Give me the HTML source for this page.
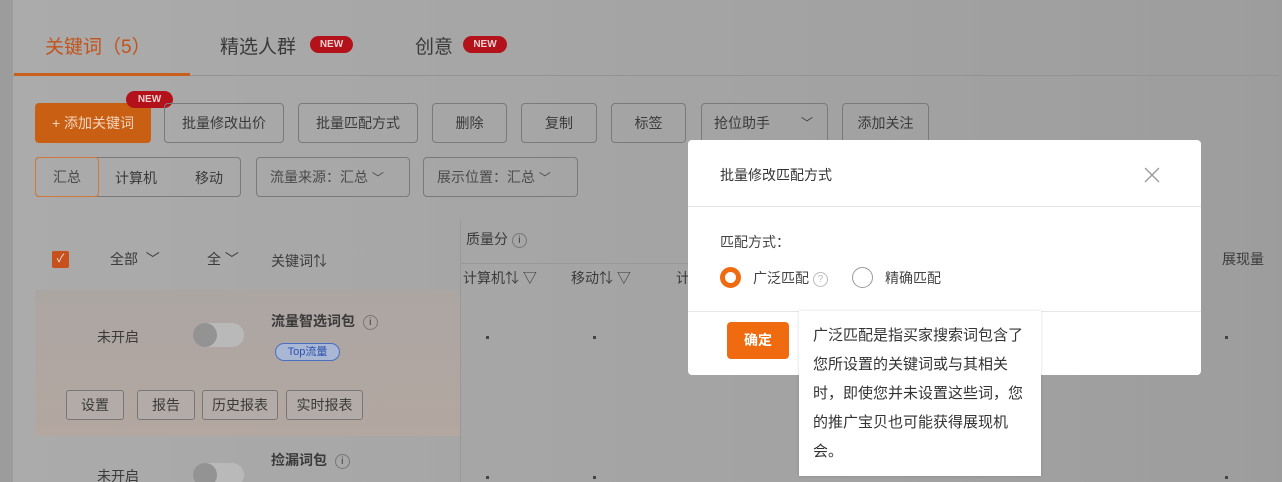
<!DOCTYPE html>
<html><head><meta charset="utf-8"><style>
*{margin:0;padding:0;box-sizing:border-box}
html,body{width:1282px;height:482px;overflow:hidden}
body{background:#9c9c9c;font-family:"Liberation Sans","Noto Sans CJK SC",sans-serif;position:relative;color:#3a3a3a}
.a{position:absolute;white-space:nowrap}
.panel{position:absolute;left:13px;top:0;width:1266px;height:482px;background:linear-gradient(90deg,#ababab,#a3a3a3 60%,#9d9d9d)}
.btn{position:absolute;top:103px;height:40px;border:1px solid #7a7a7a;border-radius:4px;font-size:14px;line-height:38px;text-align:center;color:#3a3a3a}
.new{position:absolute;background:#b3121a;color:#f0d0d0;font-size:10px;font-weight:bold;border-radius:9px;height:17px;line-height:17px;text-align:center}
.sb{position:absolute;height:40px;border:1px solid #7a7a7a;border-radius:4px;font-size:14px;line-height:38px;color:#4a4a4a}
.rb{position:absolute;top:390px;height:30px;border:1px solid #777;border-radius:3px;font-size:14px;line-height:28px;text-align:center;background:#b3aba7}
.tg{position:absolute;width:51px;height:24px;border-radius:12px;background:#b9b9b9}
.tg i{position:absolute;left:0;top:0;width:24px;height:24px;border-radius:12px;background:#939393}
.q{display:inline-block;width:15px;height:15px;border:1px solid #777;border-radius:50%;font-size:10px;line-height:13px;text-align:center;vertical-align:middle}
.dot{position:absolute;width:3px;height:3px;background:#444}
</style></head><body>
<div class="panel"></div>
<div class="a" style="left:45px;top:32px;font-size:19px;color:#c2531a">关键词（5）</div>
<div class="a" style="left:220px;top:32px;font-size:19px">精选人群</div>
<div class="new" style="left:310px;top:36px;width:43px">NEW</div>
<div class="a" style="left:415px;top:32px;font-size:19px">创意</div>
<div class="new" style="left:463px;top:36px;width:44px">NEW</div>
<div class="a" style="left:13px;top:75px;width:1266px;height:1px;background:#939393"></div>
<div class="a" style="left:14px;top:73px;width:176px;height:3px;background:#c85f1d"></div>

<div class="btn" style="left:35px;width:116px;background:#c85f12;border-color:#c85f12;color:#f3d5c0">+ 添加关键词</div>
<div class="new" style="left:126px;top:91px;width:47px">NEW</div>
<div class="btn" style="left:164px;width:120px">批量修改出价</div>
<div class="btn" style="left:298px;width:120px">批量匹配方式</div>
<div class="btn" style="left:432px;width:75px">删除</div>
<div class="btn" style="left:521px;width:76px">复制</div>
<div class="btn" style="left:611px;width:75px">标签</div>
<div class="btn" style="left:701px;width:127px;text-align:left;padding-left:12px">抢位助手<span style="position:absolute;right:14px;top:0;font-size:12px">﹀</span></div>
<div class="btn" style="left:842px;width:87px">添加关注</div>

<div class="sb" style="left:35px;top:157px;width:206px"></div>
<div class="sb" style="left:35px;top:157px;width:64px;border-color:#d0773a;text-align:center">汇总</div>
<div class="a" style="left:115px;top:168px;font-size:14px">计算机</div>
<div class="a" style="left:195px;top:168px;font-size:14px">移动</div>
<div class="sb" style="left:256px;top:157px;width:154px;padding-left:13px">流量来源：汇总 <span style="font-size:12px">﹀</span></div>
<div class="sb" style="left:423px;top:157px;width:155px;padding-left:13px">展示位置：汇总 <span style="font-size:12px">﹀</span></div>

<div class="a" style="left:52px;top:251px;width:17px;height:17px;background:#c8501c;border-radius:2px;color:#eee;font-size:11px;text-align:center;line-height:17px">✓</div>
<div class="a" style="left:110px;top:249px;font-size:14px">全部 &nbsp;﹀</div>
<div class="a" style="left:207px;top:249px;font-size:14px">全 ﹀</div>
<div class="a" style="left:271px;top:251px;font-size:14px">关键词⇅</div>
<div class="a" style="left:460px;top:220px;width:1px;height:262px;background:#999"></div>
<div class="a" style="left:460px;top:263px;width:228px;height:1px;background:#999"></div>
<div class="a" style="left:466px;top:229px;font-size:14px">质量分 <span class="q">i</span></div>
<div class="a" style="left:463px;top:268px;font-size:14px">计算机⇅ ▽</div>
<div class="a" style="left:571px;top:268px;font-size:14px">移动⇅ ▽</div>
<div class="a" style="left:676px;top:268px;font-size:14px">计</div>
<div class="a" style="left:1222px;top:249px;font-size:14px">展现量</div>

<div class="a" style="left:35px;top:290px;width:425px;height:146px;background:linear-gradient(180deg,#aca6a3,#b3a7a0)"></div>
<div class="a" style="left:97px;top:327px;font-size:14px">未开启</div>
<div class="tg" style="left:193px;top:323px"><i></i></div>
<div class="a" style="left:271px;top:311px;font-size:14px;font-weight:bold">流量智选词包 &nbsp;<span class="q" style="font-weight:normal">i</span></div>
<div class="a" style="left:275px;top:343px;width:65px;height:18px;border:1px solid #4a6fc0;border-radius:9px;background:#a9b6d4;color:#2c52b0;font-size:11px;text-align:center;line-height:16px">Top流量</div>
<div class="rb" style="left:66px;width:58px">设置</div>
<div class="rb" style="left:137px;width:58px">报告</div>
<div class="rb" style="left:202px;width:76px">历史报表</div>
<div class="rb" style="left:286px;width:77px">实时报表</div>
<div class="a" style="left:97px;top:466px;font-size:14px">未开启</div>
<div class="tg" style="left:193px;top:463px"><i></i></div>
<div class="a" style="left:271px;top:450px;font-size:14px;font-weight:bold">捡漏词包 &nbsp;<span class="q" style="font-weight:normal">i</span></div>
<div class="dot" style="left:486px;top:336px"></div><div class="dot" style="left:593px;top:336px"></div>
<div class="dot" style="left:486px;top:476px"></div><div class="dot" style="left:593px;top:476px"></div>
<div class="dot" style="left:1225px;top:336px"></div><div class="dot" style="left:1225px;top:476px"></div>

<div class="a" style="left:688px;top:140px;width:513px;height:235px;background:#fff;border-radius:4px"></div>
<div class="a" style="left:720px;top:165px;font-size:14px;color:#333">批量修改匹配方式</div>
<svg class="a" style="left:1144px;top:167px" width="16" height="16" viewBox="0 0 16 16"><path d="M1 1L15 15M15 1L1 15" stroke="#999" stroke-width="1.3"/></svg>
<div class="a" style="left:688px;top:206px;width:513px;height:1px;background:#e4e4e4"></div>
<div class="a" style="left:720px;top:232px;font-size:14px;color:#444">匹配方式：</div>
<div class="a" style="left:720px;top:267px;width:21px;height:21px;border:5px solid #f06a0f;border-radius:50%"></div>
<div class="a" style="left:753px;top:268px;font-size:14px;color:#444">广泛匹配 <span class="q" style="border-color:#bbb;color:#bbb">?</span></div>
<div class="a" style="left:852px;top:267px;width:21px;height:21px;border:1px solid #999;border-radius:50%"></div>
<div class="a" style="left:885px;top:268px;font-size:14px;color:#444">精确匹配</div>
<div class="a" style="left:688px;top:311px;width:513px;height:1px;background:#e8e8e8"></div>
<div class="a" style="left:727px;top:322px;width:62px;height:37px;background:#f06a0f;border-radius:4px;color:#fff;font-size:14px;font-weight:bold;text-align:center;line-height:37px">确定</div>
<div class="a" style="left:799px;top:311px;width:242px;height:165px;background:#fff;box-shadow:0 0 3px rgba(0,0,0,.15);padding:10px 0 0 14px;font-size:15px;line-height:29px;color:#333">广泛匹配是指买家搜索词包含了<br>您所设置的关键词或与其相关<br>时，即使您并未设置这些词，您<br>的推广宝贝也可能获得展现机<br>会。</div>
</body></html>
